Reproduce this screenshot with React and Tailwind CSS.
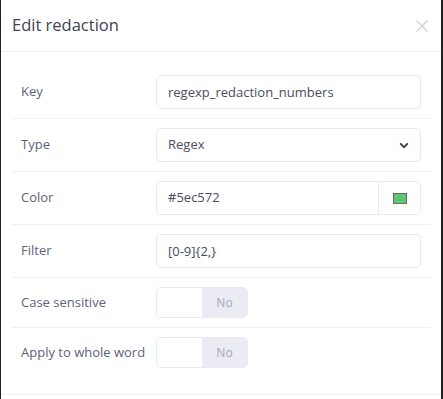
import { useState } from 'react';

const rowCls = 'flex items-center py-[9px] border-b border-[#eff0f6]';
const labelCls = 'w-[144px] shrink-0 pl-[9px] text-[13px] text-[#5e6278]';
const inputCls =
  'h-[34px] w-[265px] rounded-[5px] border border-[#e8e9f2] bg-white px-[11px] text-[13px] text-[#4b4d5c] outline-none';

function Toggle({ value }) {
  return (
    <div className="flex h-[31px] w-[92px] overflow-hidden rounded-[5px] border border-[#e8e9f2]">
      <div className="w-[46px] bg-white" />
      <div className="flex w-[46px] items-center justify-center bg-[#ebecf3] text-[12px] text-[#a5a7ba]">
        {value ? 'Yes' : 'No'}
      </div>
    </div>
  );
}

export default function App() {
  const [form] = useState({
    key: 'regexp_redaction_numbers',
    type: 'Regex',
    color: '#5ec572',
    filter: '[0-9]{2,}',
  });

  return (
    <div
      className="h-[399px] w-[443px] border-l border-r-2 border-[#1e2023] bg-white"
      style={{ fontFamily: '"Open Sans", "Liberation Sans", sans-serif' }}
    >
      {/* Header */}
      <div className="flex h-[52px] items-center justify-between border-b border-[#eceef4] pl-[11px] pr-[13px]">
        <h2 className="text-[16.5px] text-[#3f4254]">Edit redaction</h2>
        <svg width="12" height="12" viewBox="0 0 12 12" className="text-[#d3d5e1]">
          <path d="M1 1L11 11M11 1L1 11" stroke="currentColor" strokeWidth="1.6" strokeLinecap="round" />
        </svg>
      </div>

      {/* Body */}
      <div className="pl-[11px] pr-[10px] pt-[14px]">
        <div className={rowCls}>
          <div className={labelCls}>Key</div>
          <input className={inputCls} defaultValue={form.key} />
        </div>

        <div className={rowCls}>
          <div className={labelCls}>Type</div>
          <div className={`${inputCls} flex items-center justify-between`}>
            <span>{form.type}</span>
            <svg width="10" height="7" viewBox="0 0 10 7" className="text-[#3a3c48]">
              <path d="M1.2 1.3L5 5.1L8.8 1.3" fill="none" stroke="currentColor" strokeWidth="1.9" />
            </svg>
          </div>
        </div>

        <div className={rowCls}>
          <div className={labelCls}>Color</div>
          <div className="flex h-[34px] w-[265px] rounded-[5px] border border-[#e8e9f2]">
            <div className="flex flex-1 items-center px-[11px] text-[13px] text-[#4b4d5c]">{form.color}</div>
            <div className="flex w-[42px] items-center justify-center border-l border-[#e8e9f2]">
              <div className="h-[11px] w-[14px] border border-[#6b6b6b] bg-[#5ec572]" />
            </div>
          </div>
        </div>

        <div className={rowCls}>
          <div className={labelCls}>Filter</div>
          <input className={inputCls} defaultValue={form.filter} />
        </div>

        <div className={rowCls}>
          <div className={labelCls}>Case sensitive</div>
          <Toggle value={false} />
        </div>

        <div className="flex items-center py-[9px]">
          <div className={labelCls}>Apply to whole word</div>
          <Toggle value={false} />
        </div>
      </div>

      {/* Footer divider */}
      <div className="mt-[17px] border-t border-[#eceef4]" />
    </div>
  );
}
